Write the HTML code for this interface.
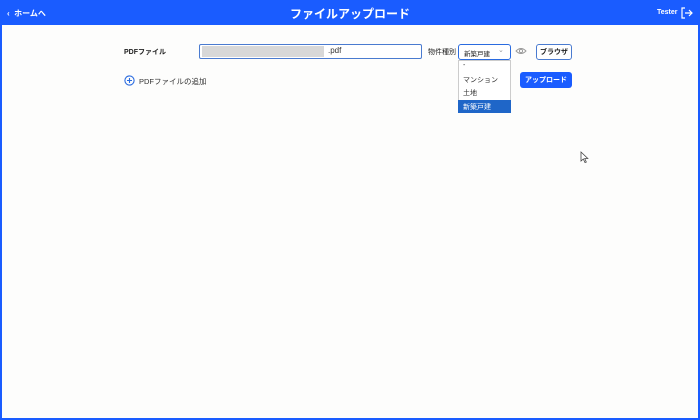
<!DOCTYPE html>
<html><head><meta charset="utf-8"><style>
*{margin:0;padding:0;box-sizing:border-box}
body{width:700px;height:420px;background:#1a5cff;position:relative;overflow:hidden;font-family:"Liberation Sans","Noto Sans CJK JP",sans-serif}
.main{position:absolute;left:2px;top:25px;width:696px;height:393px;background:#fdfdfc}
.a{position:absolute;white-space:nowrap}
.btn{display:flex;align-items:center;justify-content:center}
</style></head><body>
<div class="a" style="left:7px;top:8px;color:#fff;font-size:8px;font-weight:bold">‹&nbsp; ホームへ</div>
<div class="a" style="left:0;width:700px;text-align:center;top:5px;color:#fff;font-size:12px;font-weight:bold">ファイルアップロード</div>
<div class="a" style="left:657px;top:9px;color:#fff;font-size:7px;font-weight:bold">Tester</div>
<svg class="a" style="left:681px;top:7px" width="12" height="12" viewBox="0 0 12 12" fill="none" stroke="#fff" stroke-width="1.2"><path d="M4 1H1V11H4M4 6H11M8 3L11 6L8 9"/></svg>
<div class="main"></div>
<div class="a" style="left:124px;top:47px;font-size:7px;font-weight:bold;color:#222">PDFファイル</div>
<div class="a" style="left:199px;top:44px;width:223px;height:15px;border:1px solid #4a7bd0;border-radius:2px;background:#fff"></div>
<div class="a" style="left:202px;top:46px;width:122px;height:11px;background:#d8d8d8"></div>
<div class="a" style="left:328px;top:46px;font-size:8px;color:#333">.pdf</div>
<div class="a" style="left:428px;top:47px;font-size:7px;color:#222">物件種別</div>
<div class="a" style="left:458px;top:44px;width:53px;height:16px;border:1.5px solid #2a6be0;border-radius:3px;background:#fff"></div>
<div class="a" style="left:464px;top:48px;font-size:6.5px;color:#222">新築戸建</div>
<div class="a" style="left:498px;top:46px;font-size:7px;color:#999">⌄</div>
<div class="a" style="left:458px;top:60px;width:53px;height:53px;background:#fff;border:1px solid #ccc"></div>
<div class="a" style="left:463px;top:62px;font-size:7px;color:#333">-</div>
<div class="a" style="left:463px;top:75px;font-size:7px;color:#333">マンション</div>
<div class="a" style="left:463px;top:88px;font-size:7px;color:#333">土地</div>
<div class="a" style="left:458px;top:100px;width:53px;height:13px;background:#1f66c8"></div>
<div class="a" style="left:463px;top:102px;font-size:7px;color:#fff">新築戸建</div>
<svg class="a" style="left:515px;top:46px" width="12" height="10" viewBox="0 0 12 10" fill="none" stroke="#999" stroke-width="0.9"><path d="M1 5Q6 0 11 5Q6 10 1 5Z"/><circle cx="6" cy="5" r="1.6"/></svg>
<div class="a btn" style="left:536px;top:44px;width:36px;height:16px;border:1px solid #4a7bd0;border-radius:3px;background:#fff;font-size:7px;font-weight:bold;color:#222">ブラウザ</div>
<div class="a btn" style="left:520px;top:72px;width:52px;height:16px;background:#1a5cff;border-radius:3px;font-size:7px;font-weight:bold;color:#fff">アップロード</div>
<svg class="a" style="left:124px;top:75px" width="11" height="11" viewBox="0 0 11 11" fill="none" stroke="#2a6be0" stroke-width="1.1"><circle cx="5.5" cy="5.5" r="4.6"/><path d="M5.5 3V8M3 5.5H8"/></svg>
<div class="a" style="left:139px;top:76px;font-size:7.5px;color:#333">PDFファイルの追加</div>
<svg class="a" style="left:580px;top:151px" width="9" height="12" viewBox="0 0 9 12"><path d="M1 1V10L3.3 8L5 11.5L6.3 11L4.7 7.5H7.8Z" fill="#fff" stroke="#444" stroke-width="0.8"/></svg>
</body></html>
